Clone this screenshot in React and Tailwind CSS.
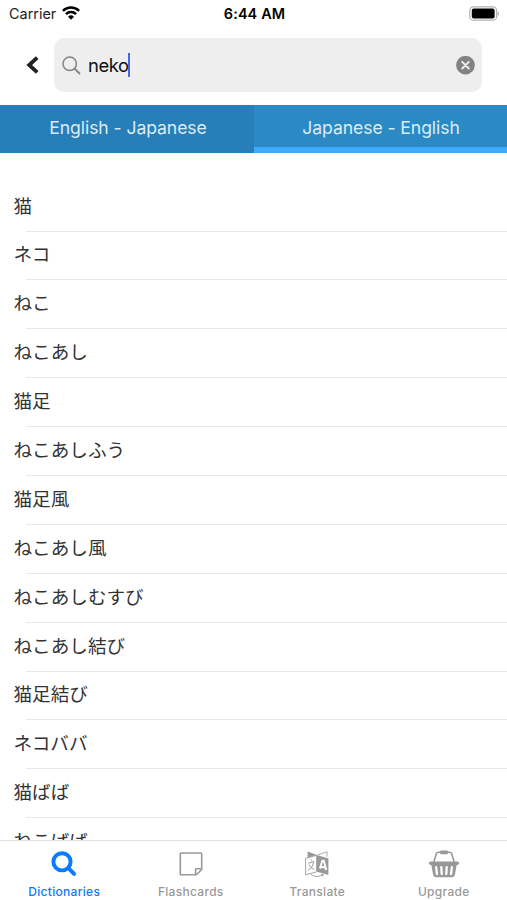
const results = [
  '猫',
  'ネコ',
  'ねこ',
  'ねこあし',
  '猫足',
  'ねこあしふう',
  '猫足風',
  'ねこあし風',
  'ねこあしむすび',
  'ねこあし結び',
  '猫足結び',
  'ネコババ',
  '猫ばば',
  'ねこばば',
]

function WifiIcon() {
  return (
    <svg width="18" height="14" viewBox="0 0 18 14" fill="none" stroke="#000" strokeWidth="2.5">
      <path d="M0.9 4.9a11.6 11.6 0 0 1 16.2 0" />
      <path d="M3.9 8.2a7.3 7.3 0 0 1 10.2 0" />
      <path d="M9 13.7 6 10.7a4.3 4.3 0 0 1 6 0z" fill="#000" stroke="none" />
    </svg>
  )
}

function BatteryIcon() {
  return (
    <svg width="31" height="15" viewBox="0 0 31 15">
      <rect x="0.8" y="0.8" width="26.8" height="13.4" rx="3.8" fill="#fff" stroke="#b3b3b3" strokeWidth="1.3" />
      <rect x="2.8" y="2.6" width="22.8" height="9.8" rx="2" fill="#000" />
      <path d="M28.8 5.2c1.6.6 1.6 4 0 4.6z" fill="#aaa" />
    </svg>
  )
}

function StatusBar() {
  return (
    <div className="grid h-7 shrink-0 grid-cols-3 items-center pl-[9px] pr-[7px]">
      <div className="flex items-center gap-[6px] pb-px text-[14.4px] tracking-[0.02px] text-[#222]">
        Carrier
        <WifiIcon />
      </div>
      <div className="text-center text-[14.4px] font-semibold tracking-[0.15px] text-black">6:44 AM</div>
      <div className="flex justify-end pb-[2px]">
        <BatteryIcon />
      </div>
    </div>
  )
}

function SearchHeader() {
  return (
    <div className="flex h-[77px] shrink-0 pl-[25px] pr-[25px] pt-[10px]">
      <div className="flex h-[54px] w-[29px] items-center">
        <svg width="15" height="18" viewBox="0 0 15 18" fill="none" stroke="#222" strokeWidth="3.8">
          <path d="M12.2 1.7 4.2 9l8 7.3" />
        </svg>
      </div>
      <div className="flex h-[54px] flex-1 items-center rounded-[10px] bg-[#eeeeee] pl-[8px] pr-[7px]">
        <svg width="19" height="19" viewBox="0 0 19 19" fill="none" stroke="#858587" strokeWidth="1.5">
          <circle cx="7.7" cy="7.7" r="6.7" />
          <path d="m12.5 12.5 5.5 5.5" strokeWidth="1.9" />
        </svg>
        <span className="ml-[7px] pt-px text-[18.4px] tracking-[-0.4px] text-[#111]">neko</span>
        <span className="-ml-px h-6 w-[2px] bg-[#4169e8]" />
        <svg className="ml-auto" width="19" height="19" viewBox="0 0 19 19">
          <circle cx="9.5" cy="9.2" r="9.3" fill="#828284" />
          <path d="m6.2 5.9 6.6 6.6m0-6.6-6.6 6.6" stroke="#f0f0f0" strokeWidth="1.9" strokeLinecap="round" />
        </svg>
      </div>
    </div>
  )
}

function LanguageTabs() {
  return (
    <div className="flex h-[48px] shrink-0 text-[17.6px] tracking-[-0.08px] text-[#d8edf9]">
      <div className="flex w-[254px] justify-center bg-[#287eb8] pl-[2px] pt-[9px] leading-[27px]">English - Japanese</div>
      <div className="flex flex-1 justify-center border-b-[6px] border-[#41abfb] bg-[#2b8ac3] pl-px pt-[9px] leading-[27px]">
        Japanese - English
      </div>
    </div>
  )
}

function ResultList() {
  return (
    <ul className="min-h-0 flex-1 overflow-hidden pt-[27.5px] text-[18.6px] text-[#333]">
      {results.map((word) => (
        <li key={word} className="flex h-[48.9px] flex-col">
          <span className="flex-1 pl-[13.5px] leading-[50px]">{word}</span>
          <span className="ml-[26px] h-px shrink-0 bg-[#e8e8e8]" />
        </li>
      ))}
    </ul>
  )
}

function DictionaryIcon() {
  return (
    <svg width="26" height="26" viewBox="0 0 26 26" fill="none" stroke="#0a7aff">
      <circle cx="11" cy="10.8" r="8.6" strokeWidth="3.9" />
      <path d="m17.6 17.3 5.5 5.5" strokeWidth="4" strokeLinecap="round" />
    </svg>
  )
}

function FlashcardIcon() {
  return (
    <svg width="26" height="26" viewBox="0 0 26 26" fill="none" stroke="#989898" strokeWidth="1.6" strokeLinejoin="round">
      <path d="M3 2h20q.7 0 .7.7v15.8L18.4 23.8H3q-.7 0-.7-.7V2.7q0-.7.7-.7z" />
      <path d="M17.6 23.8v-5.2q0-.8.8-.8h5.2" />
    </svg>
  )
}

function TranslateIcon() {
  return (
    <svg width="26" height="28" viewBox="0 0 26 28" fill="none" stroke="#999">
      <path d="M3.6 1.4 13 5l-9.4 3z" fill="#999" stroke="none" />
      <path d="M13.4 5 23 1.8v5" strokeWidth="0.8" />
      <path d="m1.6 8.3 11-3v16.6l-11 2.9z" fill="#fff" strokeWidth="0.9" />
      <path d="m13 5.1 11.4 3.5v16.4L13 21.8z" fill="#999" stroke="none" />
      <path d="m15.9 18.6 2.5-8h1.4l2.4 9.4m-5.4-3.2 4.2.8" stroke="#fff" strokeWidth="1.9" />
      <path d="m7 9.6 1.1 1.5M4.2 13.2l6-1.6M9.6 12.2c-.6 3.6-2.5 6.3-5.4 8M5 14.5c1.1 2.6 3 4.2 5.4 4.6" strokeWidth="1" />
      <path d="M7 24.6c3.7 2.4 8.4 2.3 12 .1m-2.2-.1 2.4-.2-.4 2.2" strokeWidth="0.9" />
    </svg>
  )
}

function BasketIcon() {
  return (
    <svg width="32" height="28" viewBox="0 0 32 28" fill="#989898">
      <path d="m5.8 12 2.5-8.2q.5-1.6 2-1.6h11.4q1.5 0 2 1.6l2.5 8.2" fill="none" stroke="#989898" strokeWidth="1.6" />
      <rect x="12.2" y="0.4" width="7.8" height="3.8" rx="1" />
      <rect x="1" y="11.4" width="30" height="3.6" rx="1.7" />
      <path d="M3.1 14h25.8l-2.1 11.1q-.4 2.1-2.5 2.1H7.7q-2.1 0-2.5-2.1z" />
      <path d="m8.1 17.1.9 6.9m4.3-6.9.4 6.9m5-6.9-.4 6.9m5.6-6.9-.9 6.9" stroke="#fff" strokeWidth="2.3" strokeLinecap="round" />
    </svg>
  )
}

const navItems = [
  { label: 'Dictionaries', icon: DictionaryIcon, active: true },
  { label: 'Flashcards', icon: FlashcardIcon },
  { label: 'Translate', icon: TranslateIcon },
  { label: 'Upgrade', icon: BasketIcon },
]

function BottomNav() {
  return (
    <nav className="grid h-[60px] shrink-0 grid-cols-4 border-t border-[#dfdfdf] bg-white pl-px">
      {navItems.map(({ label, icon: Icon, active }) => (
        <div key={label} className={active ? 'flex flex-col items-center text-[#0a7aff]' : 'flex flex-col items-center text-[#999]'}>
          <div className="flex h-[42px] items-center pt-[4px]">
            <Icon />
          </div>
          <span className="text-[12px] font-medium leading-[17px] tracking-[0.3px]">{label}</span>
        </div>
      ))}
    </nav>
  )
}

function App() {
  return (
    <div className="flex h-screen flex-col overflow-hidden bg-white font-['Inter','Noto_Sans_CJK_JP',sans-serif]">
      <StatusBar />
      <SearchHeader />
      <LanguageTabs />
      <ResultList />
      <BottomNav />
    </div>
  )
}

export default App
